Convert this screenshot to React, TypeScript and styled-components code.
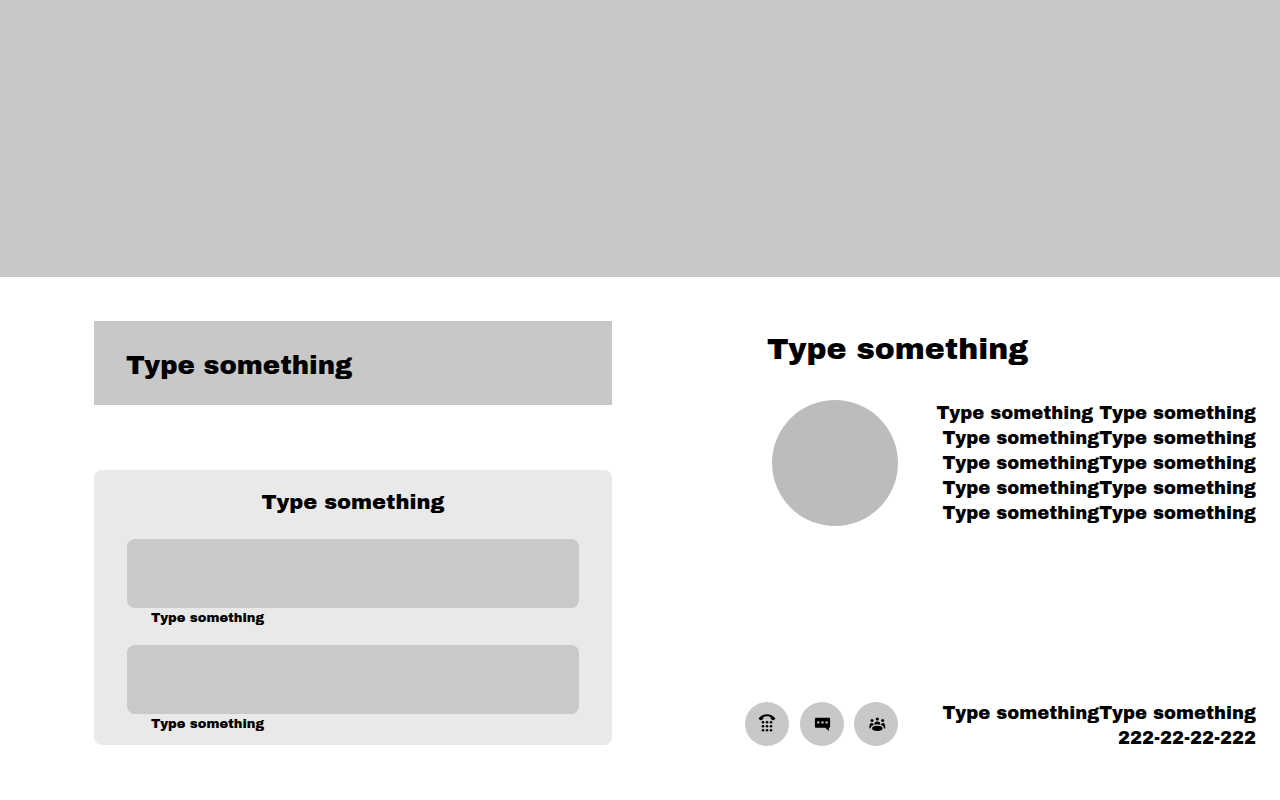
import React from "react";
import styled, { createGlobalStyle } from "styled-components";

const GlobalStyle = createGlobalStyle`
  *, *::before, *::after { box-sizing: border-box; }
  body {
    margin: 0;
    background: #fff;
    color: #000;
    font-family: "Arial Black", "Archivo Black", Inter, sans-serif;
    font-weight: 400;
  }
`;

const Hero = styled.header`
  height: 277px;
  background: #c8c8c8;
`;

const Content = styled.main`
  display: grid;
  grid-template-columns: 518fr 511fr;
  align-items: start;
  column-gap: 133px;
  padding: 44px 24px 48px 94px;
`;

const Column = styled.section`
  display: flex;
  flex-direction: column;
  min-width: 0;
`;

const Banner = styled.div`
  display: flex;
  align-items: center;
  height: 84px;
  padding: 4px 32px 0;
  background: #c8c8c8;
`;

const Title = styled.h1<{ $size: number }>`
  margin: 0;
  font-size: ${(p) => p.$size}px;
  line-height: 40px;
  font-weight: 400;
`;

const Card = styled.form`
  display: flex;
  flex-direction: column;
  margin-top: 65px;
  padding: 16px 33px 11px;
  border-radius: 8px;
  background: #e9e9e9;
`;

const CardTitle = styled.h2`
  margin: 0 0 21px;
  font-size: 21px;
  line-height: 32px;
  font-weight: 400;
  text-align: center;
`;

const Field = styled.div`
  display: flex;
  flex-direction: column;
  & + & { margin-top: 17px; }
`;

const Input = styled.input`
  width: 100%;
  height: 69px;
  padding: 0 24px;
  border: 0;
  border-radius: 8px;
  background: #c9c9c9;
  font: inherit;
`;

const Label = styled.label`
  padding-left: 24px;
  font-size: 13px;
  line-height: 20px;
`;

const Heading = styled.div`
  padding: 8px 22px 0;
`;

const Profile = styled.div`
  display: flex;
  justify-content: space-between;
  margin-top: 31px;
  padding-left: 27px;
`;

const Avatar = styled.div`
  flex: none;
  width: 126px;
  height: 126px;
  border-radius: 50%;
  background: #bcbcbc;
`;

const Lines = styled.p`
  margin: 0;
  padding-top: 1px;
  font-size: 18px;
  line-height: 25px;
  text-align: right;
  white-space: nowrap;
`;

const Line = styled.span`
  display: block;
`;

const Footer = styled.footer`
  display: flex;
  justify-content: space-between;
  align-items: flex-start;
  margin-top: 174px;
`;

const Actions = styled.nav`
  display: flex;
  justify-content: space-between;
  width: 153px;
  padding-top: 2px;
`;

const RoundButton = styled.button`
  display: flex;
  align-items: center;
  justify-content: center;
  width: 44px;
  height: 44px;
  padding: 0;
  border: 0;
  border-radius: 50%;
  background: #c8c8c8;
  color: #000;
  cursor: pointer;
`;

const Icon = styled.svg`
  width: 20px;
  height: 20px;
  fill: currentColor;
`;

const PhoneIcon = () => (
  <Icon viewBox="0 0 20 20" aria-hidden="true">
    <path d="M1.800 4.300C3.900 1.600 6.700.3 10 .3s6.100 1.300 8.200 4c.2.3.2.500-.1.700l-1.500 1.200c-.3.2-.5.2-.8 0l-1.900-1.300c-.2-.2-.3-.4-.3-.700V2.900C12.500 2.400 11.300 2.200 10 2.200s-2.500.2-3.600.7v1.300c0 .3-.1.500-.3.700L4.200 6.200c-.3.2-.5.2-.8 0L1.900 5c-.3-.2-.3-.4-.1-.7Z" />
    {[8.300, 12.300, 16.300].map((y) =>
      [6, 10, 14].map((x) => <circle key={`${x}-${y}`} cx={x} cy={y} r="1.250" />)
    )}
  </Icon>
);

const ChatIcon = () => (
  <Icon viewBox="0 0 20 20" aria-hidden="true">
    <path
      fillRule="evenodd"
      d="M4.200 3.800h12.600c.8 0 1.300.5 1.300 1.300v7.300c0 .8-.5 1.300-1.300 1.300v3.200L13.300 13.700H4.200c-.8 0-1.300-.5-1.300-1.300V5.100c0-.8.5-1.300 1.300-1.300ZM6.300 7.200a1.200 1.200 0 1 0 0 2.400 1.200 1.200 0 0 0 0-2.400Zm4.200 0a1.200 1.200 0 1 0 0 2.400 1.200 1.200 0 0 0 0-2.400Zm4.200 0a1.200 1.200 0 1 0 0 2.400 1.200 1.200 0 0 0 0-2.400Z"
    />
  </Icon>
);

const GroupIcon = () => (
  <Icon viewBox="0 0 20 20" aria-hidden="true">
    <circle cx="11.300" cy="5" r="1.600" />
    <circle cx="6" cy="6.400" r="1.500" />
    <circle cx="16.700" cy="6.400" r="1.500" />
    <ellipse cx="11.300" cy="14.300" rx="5.200" ry="2.600" />
    <path d="M8.300 10.700c0-2 1-3.200 3-3.200s3 1.200 3 3.200a12 12 0 0 0-6 0Z" />
    <path d="M3.400 14.600c-.3-3.800.4-5.700 2.300-5.700 1.200 0 1.800.7 1.900 2-1.600.6-2.500 1.400-2.800 2.600-.1.600-.6 1.100-1.400 1.100Z" />
    <path d="M19.200 14.600c.3-3.800-.4-5.700-2.300-5.700-1.200 0-1.800.7-1.900 2 1.600.6 2.500 1.400 2.800 2.600.1.600.6 1.100 1.400 1.100Z" />
  </Icon>
);

const phrase = "Type something";
const details = [`${phrase} ${phrase}`, ...Array(4).fill(phrase + phrase)];
const contact = [phrase + phrase, "222-22-22-222"];

export default function App() {
  return (
    <>
      <GlobalStyle />
      <Hero />
      <Content>
        <Column>
          <Banner>
            <Title $size={26}>{phrase}</Title>
          </Banner>
          <Card>
            <CardTitle>{phrase}</CardTitle>
            {["first", "second"].map((id) => (
              <Field key={id}>
                <Input id={id} type="text" />
                <Label htmlFor={id}>{phrase}</Label>
              </Field>
            ))}
          </Card>
        </Column>
        <Column>
          <Heading>
            <Title as="h2" $size={30}>{phrase}</Title>
          </Heading>
          <Profile>
            <Avatar />
            <Lines>
              {details.map((text, i) => <Line key={i}>{text}</Line>)}
            </Lines>
          </Profile>
          <Footer>
            <Actions>
              <RoundButton type="button" aria-label="Call"><PhoneIcon /></RoundButton>
              <RoundButton type="button" aria-label="Chat"><ChatIcon /></RoundButton>
              <RoundButton type="button" aria-label="Group"><GroupIcon /></RoundButton>
            </Actions>
            <Lines>
              {contact.map((text) => <Line key={text}>{text}</Line>)}
            </Lines>
          </Footer>
        </Column>
      </Content>
    </>
  );
}
